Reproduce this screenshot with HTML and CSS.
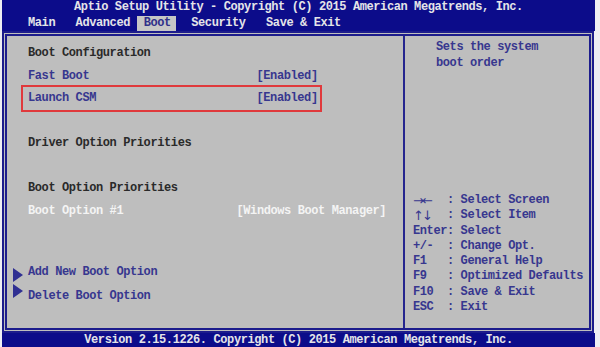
FILE: index.html
```html
<!DOCTYPE html>
<html>
  <head>
    <meta charset="utf-8">
    <title>Aptio Setup Utility</title>
    <link rel="stylesheet" href="styles.css">
  </head>
  <body>
    <div class="screen">
      <div class="header">
        <div class="title">Aptio Setup Utility - Copyright (C) 2015 American Megatrends, Inc.</div>
        <div class="tabs">Main   Advanced  <span class="tabActive">Boot</span>   Security   Save &amp; Exit</div>
      </div>

      <div class="main">
        <div class="left">
          <div class="row heading">Boot Configuration</div>
          <div class="row item"><span class="label">Fast Boot</span><span>[Enabled]</span></div>
          <div class="row item launch"><span class="label">Launch CSM</span><span>[Enabled]</span></div>
          <div class="row"></div>
          <div class="row heading">Driver Option Priorities</div>
          <div class="row"></div>
          <div class="row heading">Boot Option Priorities</div>
          <div class="row selected"><span class="label labelWide">Boot Option #1</span><span>[Windows Boot Manager]</span></div>

          <div class="menuRow item addRow">
            <svg class="tri" width="10" height="14" viewBox="0 0 10 14"><polygon points="0,0 10,7 0,14" fill="#2f2f92"/></svg>
            <span>Add New Boot Option</span>
          </div>
          <div class="menuRow item deleteRow">
            <svg class="tri" width="10" height="14" viewBox="0 0 10 14"><polygon points="0,0 10,7 0,14" fill="#2f2f92"/></svg>
            <span>Delete Boot Option</span>
          </div>
        </div>

        <div class="right">
          <div class="help">Sets the system<br>boot order</div>
          <div class="keys">
            <div class="keyRow"><span class="key arrows">&rarr;&larr;</span><span>: Select Screen</span></div>
            <div class="keyRow"><span class="key arrows">&uarr;&darr;</span><span>: Select Item</span></div>
            <div class="keyRow"><span class="key">Enter</span><span>: Select</span></div>
            <div class="keyRow"><span class="key">+/-</span><span>: Change Opt.</span></div>
            <div class="keyRow"><span class="key">F1</span><span>: General Help</span></div>
            <div class="keyRow"><span class="key">F9</span><span>: Optimized Defaults</span></div>
            <div class="keyRow"><span class="key">F10</span><span>: Save &amp; Exit</span></div>
            <div class="keyRow"><span class="key">ESC</span><span>: Exit</span></div>
          </div>
        </div>
      </div>

      <div class="footer">Version 2.15.1226. Copyright (C) 2015 American Megatrends, Inc.</div>
    </div>
  </body>
</html>
```

FILE: styles.css
```css
body {
  margin: 0;
  background-color: #eeeef3;
  font-family: "Liberation Mono", "DejaVu Sans Mono", monospace;
  font-weight: bold;
  font-size: 12px;
  letter-spacing: -0.4px;
}

.screen {
  margin-left: 2px;
  width: 593px;
  height: 347px;
  display: flex;
  flex-direction: column;
}

/* top bar */

.header {
  height: 31px;
  background-color: #0c0c8a;
  color: #e4e4e8;
}

.title {
  line-height: 14px;
  text-align: center;
}

.tabs {
  margin-top: 2px;
  height: 15px;
  line-height: 15px;
  padding-left: 26px;
  white-space: pre;
}

.tabActive {
  display: inline-block;
  background-color: #c6c6c6;
  color: #30308a;
  padding: 0 5px 0 7px;
  margin: 0 -5px 0 -7px;
}

/* grey area */

.main {
  width: 592px;
  height: 302px;
  box-sizing: border-box;
  background-color: #bebebe;
  border: 5px double #1c1c8c;
  display: flex;
}

.left {
  width: 398px;
  box-sizing: border-box;
  border-right: 2px solid #25258e;
  padding: 6px 0 0 21px;
}

.row {
  display: flex;
  height: 22.5px;
  line-height: 22.5px;
  white-space: pre;
}

.label {
  width: 228.5px;
}

.labelWide {
  width: 208.5px;
}

.heading {
  color: #2a2a2a;
}

.item {
  color: #37378f;
}

.selected {
  color: #f4f4f4;
}

.launch {
  width: 301px;
  height: 26.5px;
  box-sizing: border-box;
  margin: -2px 0 -2px -7px;
  padding-left: 5px;
  border: 2px solid #e0393c;
}

.menuRow {
  display: flex;
  align-items: flex-start;
  height: 24px;
  line-height: 24px;
}

.addRow {
  margin-top: 38px;
}

.tri {
  flex: none;
  margin: 0 5px 0 -15px;
}

.addRow .tri {
  margin-top: 8px;
}

.deleteRow .tri {
  margin-top: 0;
}

.right {
  flex: 1;
  padding: 3px 0 0 8px;
  color: #37378f;
}

.help {
  padding-left: 23px;
  line-height: 16px;
}

.keys {
  margin-top: 122px;
}

.keyRow {
  display: flex;
  height: 15.3px;
  line-height: 15.3px;
  white-space: pre;
}

.key {
  width: 34px;
}

.arrows {
  font-family: "DejaVu Sans", sans-serif;
  font-weight: normal;
  font-size: 13px;
  letter-spacing: -2px;
}

/* bottom bar */

.footer {
  height: 14px;
  line-height: 14px;
  background-color: #0c0c8a;
  color: #e4e4e8;
  text-align: center;
}
```
